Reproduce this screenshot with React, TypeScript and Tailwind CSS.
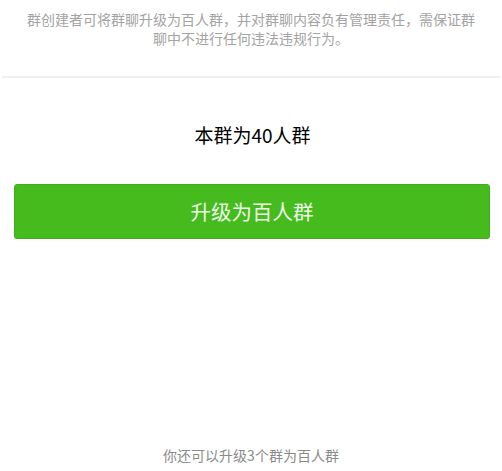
export default function App() {
    return (
        <div
            className="min-h-screen bg-white flex flex-col"
            style={{ fontFamily: '"Noto Sans CJK SC", "Noto Sans", sans-serif' }}
        >
            <header className="px-[24px] pt-[10px] pb-[28px] border-b-2 border-[#f0f0f0] mx-[2px]">
                <p className="text-[14px] leading-[19px] text-[#a3a3a3] text-center">
                    群创建者可将群聊升级为百人群，并对群聊内容负有管理责任，需保证群聊中不进行任何违法违规行为。
                </p>
            </header>
            <main className="flex flex-col">
                <h2 className="mt-[44px] ml-[3px] text-center text-[19px] leading-[26px] text-black">本群为40人群</h2>
                <button className="mt-[36px] ml-[14px] w-[476px] h-[55px] rounded-[3px] bg-[#46bb1e] border border-[#3fae1a] text-[20.5px] text-[#eef8e8]">
                    升级为百人群
                </button>
            </main>
            <footer className="mt-auto pb-[6px] text-center">
                <p className="text-[14px] leading-[20px] text-[#8a8a8a]">你还可以升级3个群为百人群</p>
            </footer>
        </div>
    );
}
